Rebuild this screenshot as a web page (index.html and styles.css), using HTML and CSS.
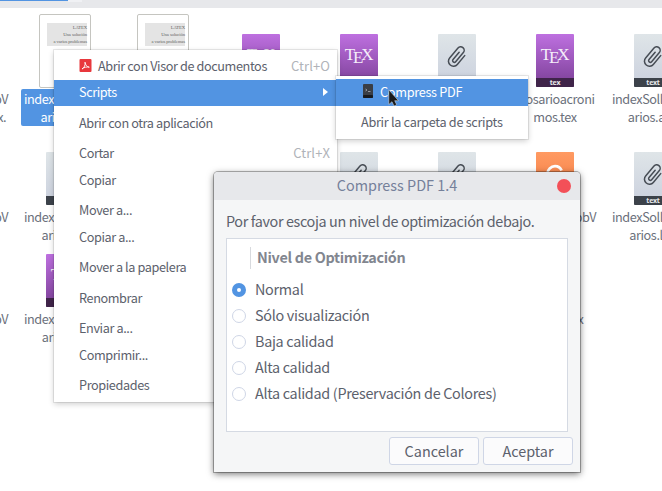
FILE: index.html
```html
<!DOCTYPE html>
<html lang="es">
<head>
    <meta charset="UTF-8">
    <meta name="viewport" content="width=device-width, initial-scale=1.0">
    <title>Compress PDF 1.4</title>
    <link rel="stylesheet" href="styles.css">
</head>
<body>
    <!-- Símbolos reutilizados por los iconos -->
    <svg class="sprites" width="0" height="0">
        <symbol id="clip" viewBox="-11 -11 22 22">
            <path transform="rotate(40)" d="M5-6V5.500a5 5 0 0 1-10 0V-7.500a3.500 3.500 0 0 1 7 0V4.500a1.700 1.700 0 0 1-3.400 0V-5" fill="none" stroke="#474d55" stroke-width="1.500" stroke-linecap="round"/>
        </symbol>
    </svg>

    <div class="toolbar"><div class="tab-active"></div><div class="tab-light"></div></div>

    <!-- Archivos -->
    <div class="files">
        <div class="file"><div class="thumb"></div><p>indexSollLibbV<br>arios.run1.tex.</p></div>
        <div class="file selected"><div class="thumb"><div class="page"><div class="page-title">LATEX<br>Una solución<br>a varios problemas</div></div></div><p>indexSollLibbV<br>arios.pdf</p></div>
        <div class="file"><div class="thumb"><div class="page"><div class="page-title">LATEX<br>Una solución<br>a varios problemas</div></div></div><p></p></div>
        <div class="file"><div class="thumb"><div class="icon tex"><b>T<i>E</i>X</b></div></div><p></p></div>
        <div class="file"><div class="thumb"><div class="icon tex"><b>T<i>E</i>X</b></div></div><p></p></div>
        <div class="file"><div class="thumb"><div class="icon text"><svg><use href="#clip"/></svg></div></div><p></p></div>
        <div class="file"><div class="thumb"><div class="icon tex"><b>T<i>E</i>X</b><span>tex</span></div></div><p>glosarioacroni<br>mos.tex</p></div>
        <div class="file"><div class="thumb"><div class="icon text"><svg><use href="#clip"/></svg><span>text</span></div></div><p>indexSollLibbV<br>arios.aux</p></div>

        <div class="file"><div class="thumb"></div><p>indexSollLibbV</p></div>
        <div class="file"><div class="thumb"><div class="icon text"><svg></svg><span></span></div></div><p>indexSollLibbV<br>arios.idx</p></div>
        <div class="file"><div class="thumb"></div><p></p></div>
        <div class="file"><div class="thumb"></div><p></p></div>
        <div class="file"><div class="thumb"><div class="icon text"><svg><use href="#clip"/></svg></div></div><p></p></div>
        <div class="file"><div class="thumb"><div class="icon text"><svg><use href="#clip"/></svg></div></div><p></p></div>
        <div class="file"><div class="thumb"><div class="icon backup"><svg viewBox="0 0 20 20"><path d="M3 14V9c0-4 3.500-7 7-7 3 0 5 1.500 6 4M16 10c0 4-3 6-6 6" fill="none" stroke="#fff" stroke-width="2.500"/></svg></div></div><p>indexSollLibbV</p></div>
        <div class="file"><div class="thumb"><div class="icon text"><svg><use href="#clip"/></svg><span>text</span></div></div><p>indexSollLibbV<br>arios.log</p></div>

        <div class="file"><div class="thumb"></div><p>indexSollLibbV</p></div>
        <div class="file"><div class="thumb"><div class="icon tex"><b>T<i>E</i>X</b><span></span></div></div><p>indexSollLibbV<br>arios.tex</p></div>
        <div class="file"></div>
        <div class="file"></div>
        <div class="file"></div>
        <div class="file"></div>
        <div class="file"><div class="thumb"></div><p>portad.tex</p></div>
        <div class="file"></div>
    </div>

    <!-- Menú contextual -->
    <div class="menu context-menu">
        <div class="item">
            <svg class="pdf-icon" viewBox="0 0 12 13"><rect width="12" height="13" rx="1" fill="#e8383d"/><path d="M2.500 10C5 8.500 6 6 5.500 3.200c.5 3 2 4.600 4.300 5C7 7.600 4.500 8.300 2.500 10z" fill="none" stroke="#fff" stroke-width=".9" stroke-linejoin="round"/></svg>
            Abrir con Visor de documentos<kbd>Ctrl+O</kbd>
        </div>
        <div class="item active">Scripts<span class="arrow"></span></div>
        <hr>
        <div class="item">Abrir con otra aplicación</div>
        <hr>
        <div class="item">Cortar<kbd>Ctrl+X</kbd></div>
        <div class="item">Copiar</div>
        <hr>
        <div class="item">Mover a...</div>
        <div class="item">Copiar a...</div>
        <hr>
        <div class="item">Mover a la papelera</div>
        <hr>
        <div class="item">Renombrar</div>
        <hr>
        <div class="item">Enviar a...</div>
        <div class="item">Comprimir...</div>
        <hr>
        <div class="item">Propiedades</div>
    </div>

    <div class="menu submenu">
        <div class="item active">
            <svg class="script-icon" viewBox="0 0 10 14"><rect width="10" height="14" rx="1" fill="#3a3e45"/><rect y="11" width="10" height="3" rx="1" fill="#17191d"/><path d="M2.500 5l1.500 1-1.500 1M5 7.500h2.500" fill="none" stroke="#b9bcc2" stroke-width=".7"/></svg>
            Compress PDF
        </div>
        <hr>
        <div class="item">Abrir la carpeta de scripts</div>
    </div>

    <svg class="cursor" viewBox="0 0 11 18"><path d="M.8.800v14.700l3.200-2.800 2 4.300 2.700-1.200-2-4.100H10.500z" fill="#1a1a1a" stroke="#e6e6e6" stroke-width=".5"/></svg>

    <!-- Diálogo -->
    <div class="dialog">
        <div class="titlebar"><span>Compress PDF 1.4</span><button class="close"></button></div>
        <div class="dialog-body">
            <p class="prompt">Por favor escoja un nivel de optimización debajo.</p>
            <div class="list">
                <div class="list-header">Nivel de Optimización</div>
                <div class="option"><span class="radio checked"></span>Normal</div>
                <div class="option"><span class="radio"></span>Sólo visualización</div>
                <div class="option"><span class="radio"></span>Baja calidad</div>
                <div class="option"><span class="radio"></span>Alta calidad</div>
                <div class="option"><span class="radio"></span>Alta calidad (Preservación de Colores)</div>
            </div>
            <div class="buttons">
                <button class="btn">Cancelar</button>
                <button class="btn">Aceptar</button>
            </div>
        </div>
    </div>
</body>
</html>
```

FILE: styles.css
```css
/* Base */
* {
    box-sizing: border-box;
}

body {
    margin: 0;
    width: 662px;
    height: 491px;
    overflow: hidden;
    position: relative;
    background-color: #ffffff;
    color: #5c616c;
    font-family: "Noto Sans CJK SC", "Noto Sans", sans-serif;
    font-size: 12.700px;
    letter-spacing: -0.4px;
}

p {
    margin: 0;
}

.sprites {
    position: absolute;
}

/* Barra superior */
.toolbar {
    display: flex;
    height: 8px;
    background-color: #e7e8eb;
}

.tab-active {
    width: 68px;
    height: 1px;
    background-color: #5294e2;
}

.tab-light {
    width: 14px;
    height: 2px;
    background-color: #f0f1f4;
}

/* Cuadrícula de archivos */
.files {
    display: grid;
    grid-template-columns: repeat(8, 98px);
    grid-template-rows: 118px 102px 102px;
    margin: 6px 0 0 -82px;
}

.file {
    display: flex;
    flex-direction: column;
    align-items: center;
}

.file p {
    min-width: 89px;
    padding: 1px 3px;
    text-align: center;
    white-space: nowrap;
    line-height: 17.6px;
    color: #6b707b;
}

.file.selected p {
    background-color: #5294e2;
    color: #ffffff;
    border-radius: 2px;
}

.thumb {
    display: flex;
    flex-shrink: 0;
    align-items: flex-end;
    height: 74px;
    margin-bottom: 1px;
}

.page {
    width: 52px;
    height: 74px;
    padding: 8px 3px 0 7px;
    border: 1px solid #c5c5c0;
    border-radius: 2px;
    background-color: #ffffff;
}

.page-title {
    height: 23px;
    padding-top: 1px;
    background-color: #e4e4e4;
    color: #666666;
    font: 4.700px/7px "Liberation Serif", serif;
    letter-spacing: -0.1px;
    text-align: right;
    white-space: nowrap;
}

.icon {
    display: flex;
    flex-direction: column;
    align-items: center;
    justify-content: space-between;
    width: 38px;
    height: 53px;
    margin-bottom: 1px;
    border-radius: 1px;
    overflow: hidden;
}

.icon span {
    width: 100%;
    height: 9px;
    font: bold 7px/9px "Noto Sans", sans-serif;
    letter-spacing: -0.2px;
    text-align: center;
    color: #e8e8ea;
}

.icon svg {
    width: 22px;
    height: 22px;
    margin-top: 12px;
}

.tex {
    background: linear-gradient(#be70e0, #8446a0 85%);
}

.tex span {
    background-color: #3f2449;
}

.tex b {
    margin-top: 11px;
    font: 17px/20px "Liberation Serif", serif;
    letter-spacing: -0.2px;
    color: #f5eefa;
}

.tex i {
    position: relative;
    top: 3px;
    margin: 0 -2px;
    font-style: normal;
}

.text {
    background: linear-gradient(#dfe5e8, #cdd3df 85%);
}

.text span {
    background-color: #3c424a;
}

.backup {
    background: linear-gradient(#ff9a62, #f2763c);
}

/* Menús */
.menu {
    position: absolute;
    padding: 3px 0;
    background-color: #ffffff;
    box-shadow: 0 0 0 1px rgba(0, 0, 0, 0.08), 0 2px 6px rgba(0, 0, 0, 0.2);
}

.context-menu {
    left: 54px;
    top: 50px;
    width: 283px;
    height: 352px;
}

.submenu {
    left: 336px;
    top: 76px;
    width: 192px;
    height: 63px;
}

.menu hr {
    height: 4px;
    margin: 0;
    border: none;
}

.item {
    display: flex;
    align-items: center;
    height: 26.500px;
    padding: 0 7px 2px 25px;
    white-space: nowrap;
}

.item kbd {
    margin-left: auto;
    font: inherit;
    font-size: 13px;
    letter-spacing: 0.1px;
    color: #b0b3b9;
}

.item.active {
    background-color: #5294e2;
    color: #ffffff;
}

.arrow {
    margin: 0 2px 0 auto;
    border: 4px solid transparent;
    border-left: 5px solid #ffffff;
    border-right: none;
}

.pdf-icon {
    width: 13px;
    height: 13px;
    margin-right: 6px;
}

.script-icon {
    width: 10px;
    height: 14px;
    margin: 0 7px 0 2px;
}

.submenu .item {
    letter-spacing: -0.3px;
}

.cursor {
    position: absolute;
    left: 388px;
    top: 89px;
    width: 11px;
    height: 18px;
}

/* Diálogo */
.dialog {
    position: absolute;
    left: 214px;
    top: 172px;
    width: 366px;
    height: 300px;
    border-radius: 4px 4px 0 0;
    background-color: #f5f6f7;
    box-shadow: 0 0 0 1px rgba(0, 0, 0, 0.28), 0 2px 7px rgba(0, 0, 0, 0.55);
    font-size: 14.400px;
    letter-spacing: -0.3px;
}

.titlebar {
    display: flex;
    align-items: center;
    height: 28px;
    padding-right: 9px;
    border-radius: 4px 4px 0 0;
    background-color: #e7e8eb;
    color: #75809a;
    letter-spacing: 0;
}

.titlebar span {
    flex: 1;
    padding: 0 0 3px 23px;
    text-align: center;
}

.close {
    width: 14px;
    height: 14px;
    padding: 0;
    border: none;
    border-radius: 50%;
    background-color: #f35058;
}

.dialog-body {
    padding: 11px 12px 0;
}

.prompt {
    line-height: 20px;
    white-space: nowrap;
    letter-spacing: -0.37px;
}

.list {
    height: 194px;
    margin-top: 7px;
    padding: 8px 5px;
    border: 1px solid #d5dae3;
    background-color: #ffffff;
}

.list-header {
    height: 22px;
    margin: 0 0 8px 18px;
    padding-left: 6px;
    border-left: 1px solid #d8dade;
    line-height: 20px;
    font-weight: bold;
    color: #82868f;
}

.option {
    display: flex;
    align-items: center;
    gap: 9px;
    height: 26px;
    line-height: 20px;
    padding-bottom: 2px;
    white-space: nowrap;
}

.radio {
    position: relative;
    top: 1px;
    width: 14px;
    height: 14px;
    border: 1px solid #cfd6e6;
    border-radius: 50%;
}

.radio.checked {
    border: 5px solid #5294e2;
}

.buttons {
    display: flex;
    justify-content: flex-end;
    gap: 4px;
    margin: 5px -5px 0 0;
}

.btn {
    width: 90px;
    height: 28px;
    padding: 0 0 2px;
    border: 1px solid #cfd6e6;
    border-radius: 3px;
    background-color: #fbfbfc;
    color: #5c616c;
    font: inherit;
    letter-spacing: 0;
}
```
